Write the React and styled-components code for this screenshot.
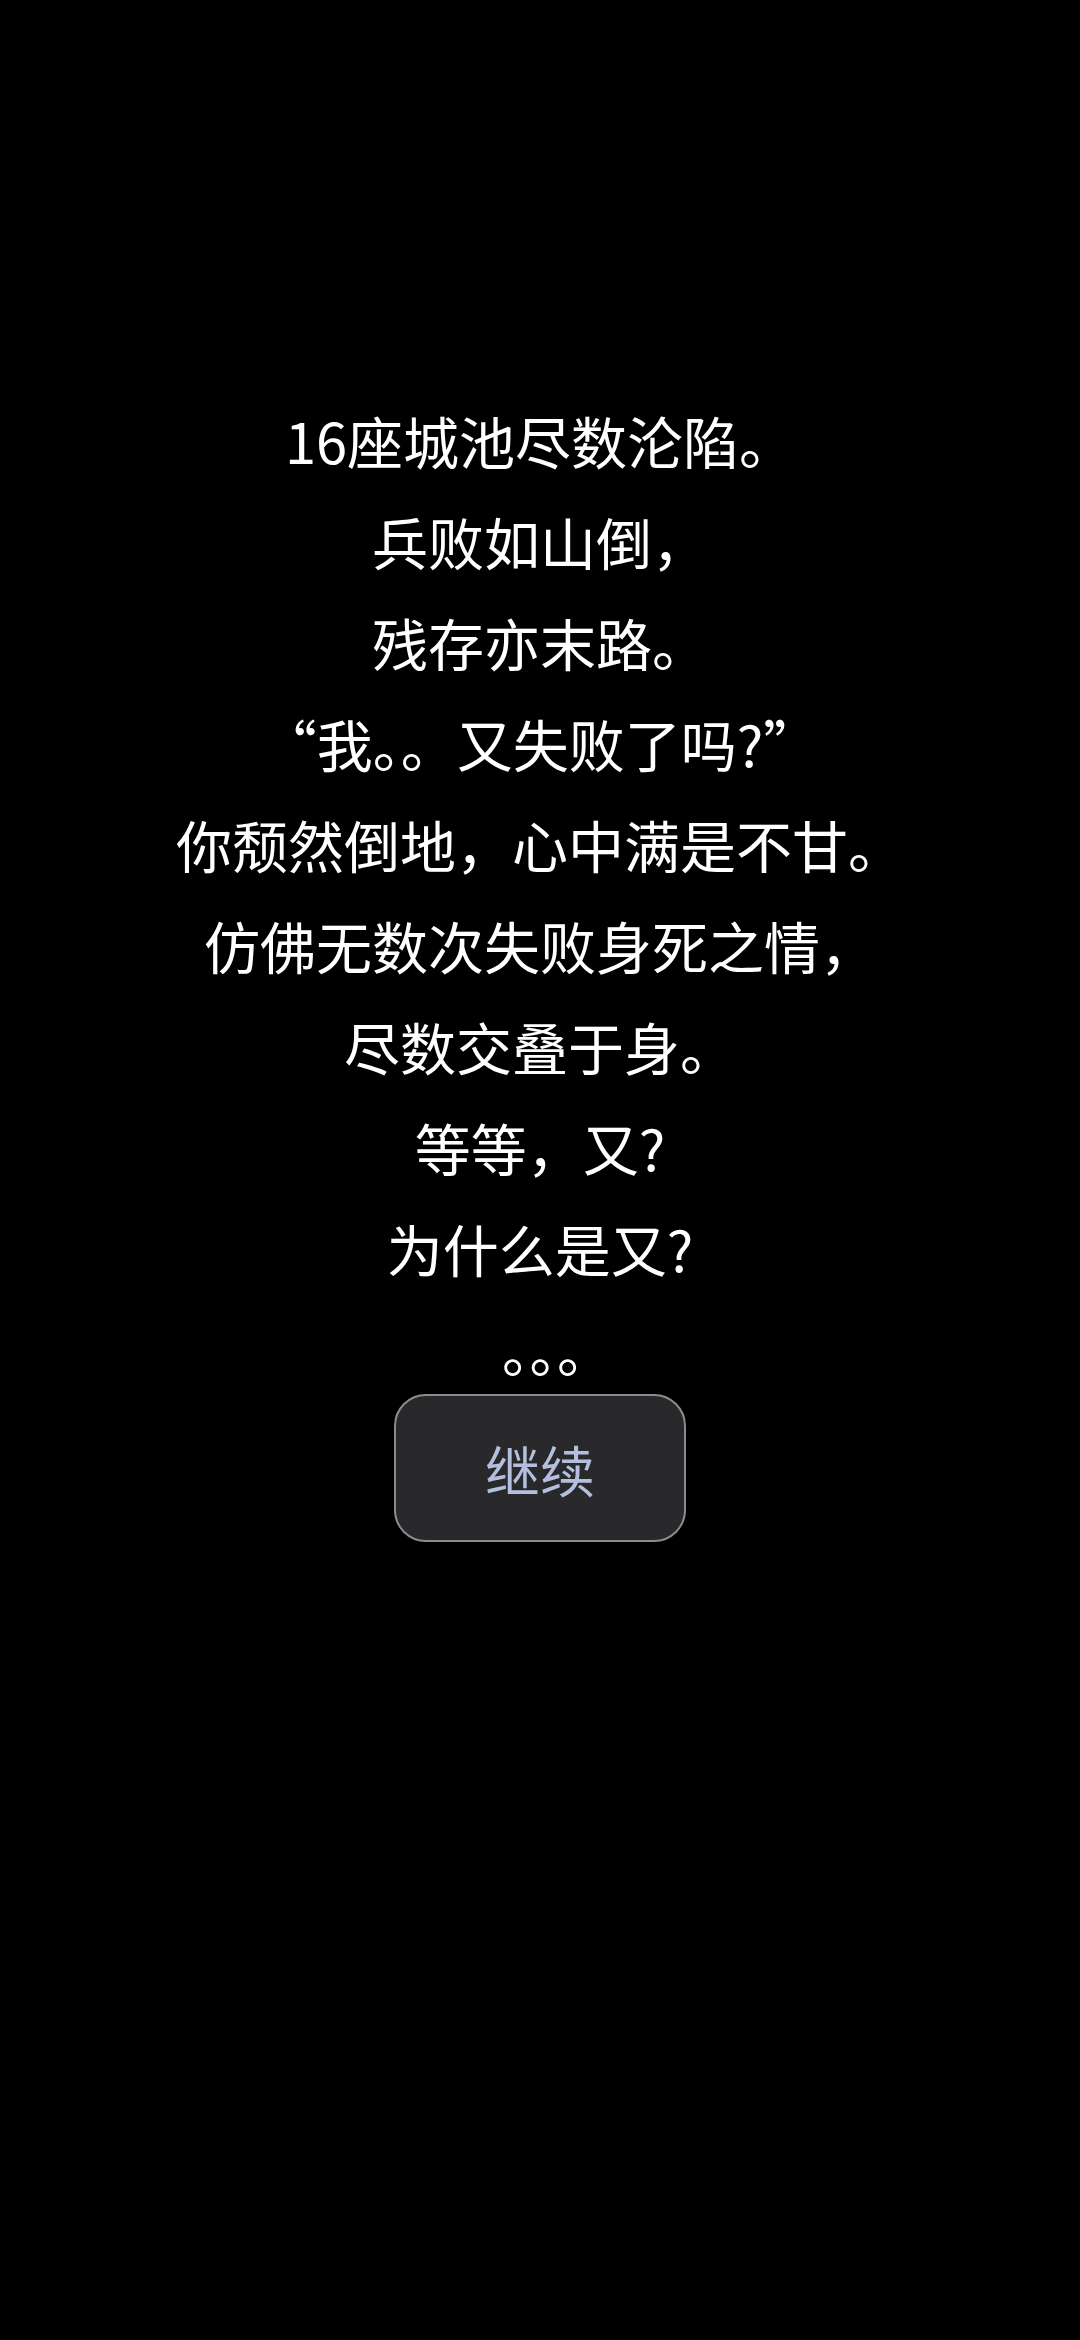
import React from "react";
import styled, { createGlobalStyle } from "styled-components";

const GlobalStyle = createGlobalStyle`
  html, body {
    margin: 0;
    padding: 0;
    background: #000;
  }
  body {
    font-family: "Noto Sans CJK SC", "Noto Sans", sans-serif;
  }
`;

const Screen = styled.div`
  min-height: 2340px;
  background: #000;
  display: flex;
  flex-direction: column;
  align-items: center;
  padding-top: 389px;
  box-sizing: border-box;
`;

const Story = styled.div`
  display: flex;
  flex-direction: column;
  align-items: center;
`;

const Line = styled.p`
  margin: 0;
  color: #fff;
  font-size: 56px;
  line-height: 101px;
  text-align: center;
  white-space: nowrap;
`;

const Pause = styled.div`
  color: #fff;
  font-size: 55px;
  line-height: 60px;
  height: 60px;
  margin-top: 20px;
  padding-left: 34px;
  text-spacing-trim: normal;
`;

const ContinueButton = styled.button`
  margin-top: 16px;
  width: 292px;
  height: 148px;
  border-radius: 32px;
  border: 2px solid #8c8c8e;
  background: #29292b;
  color: #b3bfdc;
  font-family: "Noto Sans CJK SC", sans-serif;
  font-size: 55px;
  display: flex;
  align-items: center;
  justify-content: center;
  cursor: pointer;
`;

const lines = [
  "16座城池尽数沦陷。",
  "兵败如山倒，",
  "残存亦末路。",
  "“我。。又失败了吗?”",
  "你颓然倒地，心中满是不甘。",
  "仿佛无数次失败身死之情，",
  "尽数交叠于身。",
  "等等，又?",
  "为什么是又?",
];

export default function App() {
  return (
    <>
      <GlobalStyle />
      <Screen>
        <Story>
          {lines.map((text, i) => (
            <Line key={i}>{text}</Line>
          ))}
        </Story>
        <Pause>。。。</Pause>
        <ContinueButton>继续</ContinueButton>
      </Screen>
    </>
  );
}
